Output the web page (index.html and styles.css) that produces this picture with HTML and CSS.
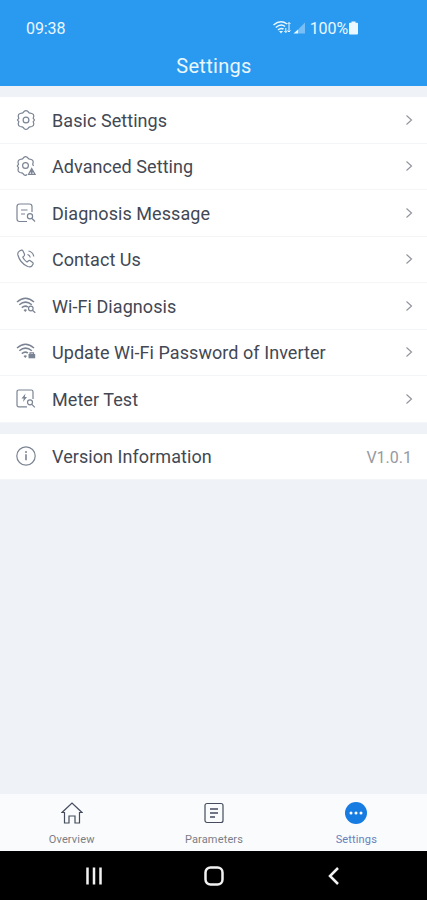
FILE: index.html
```html
<!DOCTYPE html>
<html lang="en">
<head>
    <meta charset="utf-8">
    <title>Settings</title>
    <link rel="stylesheet" href="styles.css">
</head>
<body>
<!-- shapes used in more than one row -->
<svg class="defs">
    <symbol id="arrow" viewBox="0 0 8 12"><path d="M1.5 1.5 6.5 6l-5 4.5"/></symbol>
    <symbol id="gear" viewBox="0 0 20 20">
        <path d="M8.300 1.300Q10 0 11.700 1.300L13.200 2.900 15.800 3.500Q17.900 4.100 17.800 6.200L17.200 8.300 18.500 10 17.200 11.700 17.800 13.800Q17.900 15.900 15.800 16.500L13.200 17.100 11.700 18.700Q10 20 8.300 18.700L6.800 17.100 4.200 16.500Q2.100 15.900 2.200 13.800L2.800 11.700 1.500 10 2.800 8.300 2.200 6.200Q2.100 4.100 4.200 3.500L6.800 2.900z"/>
        <circle cx="10" cy="10" r="2.900"/>
    </symbol>
    <symbol id="wifi" viewBox="0 0 20 20">
        <path d="M1 6Q9.500-1.500 18 6M3.300 8.800Q9.500 3.500 15.800 8.800M5.800 11.600Q9 9 12 11" stroke-width="1.500"/>
        <path class="fill" d="M7.500 14q1.700-1.300 3.500 0l-1.700 2z"/>
    </symbol>
</svg>
<div class="header">
    <div class="status">
        <span>09:38</span>
        <div class="signals">
            <svg class="net" width="33" height="16" viewBox="0 0 33 16">
                <path d="M.5 5Q7.500-1 14 4M2.800 7.500Q8 3 12 6.500M5 9.800Q8 7.500 10.500 9" stroke-width="1.500"/>
                <path class="fill" d="M6 11h4l-2 2.500z"/>
                <path d="M12.800 12.500V8m-1.500 3 1.500 1.500 1.500-1.500M16 2.500V12m-1.500-1.500L16 12l1.500-1.500M14.500 4 16 2.500 17.500 4"/>
                <path class="fill" d="M20.500 13.500 25 9.500v4z"/>
                <path class="faint" d="M25 13.500v-4l7-7v11z"/>
            </svg>
            <span class="percent">100%</span>
            <svg width="9" height="14" viewBox="0 0 9 14"><path class="fill" d="M2.500 1.800V.5h4v1.300H8q1 0 1 1v9.700q0 1-1 1H1q-1 0-1-1V2.800q0-1 1-1z"/></svg>
        </div>
    </div>
    <div class="title">Settings</div>
</div>
<div class="list">
    <div class="row">
        <svg class="icon"><use href="#gear"/></svg>
        <span class="label">Basic Settings</span>
        <svg class="arrow"><use href="#arrow"/></svg>
    </div>
    <div class="row">
        <svg class="icon" viewBox="0 0 20 20">
            <path d="M11 18.500Q9.500 20 8 18.700L6.500 17.100 4 16.500Q1.900 15.900 2 13.800L2.500 11.700 1.300 10 2.500 8.300 2 6.200Q1.900 4.100 4 3.500L6.500 2.900 8 1.300Q9.500 0 11.200 1.300L12.800 2.900 15.300 3.500Q17.300 4.100 17.200 6.200L16.700 8.300 17.500 10"/>
            <circle cx="9.500" cy="9.500" r="2.900"/>
            <path d="m15.700 12.500 3.300 5.800h-6.500zM14 15.800h3.500M15.700 14v4"/>
        </svg>
        <span class="label">Advanced Setting</span>
        <svg class="arrow"><use href="#arrow"/></svg>
    </div>
    <div class="row">
        <svg class="icon" viewBox="0 0 20 20">
            <path d="M11 18.500H3.500q-2.500 0-2.500-2.500V3.500Q1 1 3.500 1h10Q16 1 16 3.500V9M5 7h6.500M5 11h4"/>
            <circle cx="14" cy="13.300" r="2.600"/>
            <path d="m16 15.500 3 3"/>
        </svg>
        <span class="label">Diagnosis Message</span>
        <svg class="arrow"><use href="#arrow"/></svg>
    </div>
    <div class="row">
        <svg class="icon" viewBox="0 0 20 20">
            <path d="M3.500 2 5.500 1.200q1-.2 1.500.8l1.400 3q.4 1-.3 1.800L6.800 8.200q1.400 3 4.200 4.800l1.600-1.300q.8-.6 1.700 0l2.300 1.700q1 .9.300 2l-1 1.600q-1.400 1.500-4.200.5Q4 14.200 1.900 6q-.6-2.800 1.600-4zM11.500 5.500q2.300.6 2.800 3M12.500 2q4.500 1 5.300 5.500"/>
        </svg>
        <span class="label">Contact Us</span>
        <svg class="arrow"><use href="#arrow"/></svg>
    </div>
    <div class="row">
        <svg class="icon" viewBox="0 0 20 20">
            <use href="#wifi"/>
            <circle cx="14.800" cy="12.500" r="2.300"/>
            <path d="m16.400 14.200 2.900 2.500"/>
        </svg>
        <span class="label">Wi-Fi Diagnosis</span>
        <svg class="arrow"><use href="#arrow"/></svg>
    </div>
    <div class="row">
        <svg class="icon" viewBox="0 0 20 20">
            <use href="#wifi"/>
            <path class="fill" d="M12.500 12h6.700v4.300h-6.700z"/>
            <path d="M14 12v-1.200h3.500V12"/>
        </svg>
        <span class="label">Update Wi-Fi Password of Inverter</span>
        <svg class="arrow"><use href="#arrow"/></svg>
    </div>
    <div class="row">
        <svg class="icon" viewBox="0 0 20 20">
            <path d="M11 17.800H2.800q-1.800 0-1.800-1.800V2.800Q1 1 2.800 1h12.400Q17 1 17 2.800V10"/>
            <path class="fill" d="M9.500 4.500 5.500 9.500h2.300L7 13l4-5H8.800z"/>
            <circle cx="14" cy="13.300" r="2.500"/>
            <path d="m15.800 15.300 3 3"/>
        </svg>
        <span class="label">Meter Test</span>
        <svg class="arrow"><use href="#arrow"/></svg>
    </div>
</div>
<div class="list">
    <div class="row">
        <svg class="icon" viewBox="0 0 20 20">
            <circle cx="10" cy="10" r="9.200"/>
            <path d="M10 8.300v6" stroke-width="1.600"/>
            <circle class="fill" cx="10" cy="6" r="1"/>
        </svg>
        <span class="label">Version Information</span>
        <span class="value">V1.0.1</span>
    </div>
</div>
<div class="tabs">
    <div class="tab">
        <svg width="22" height="22" viewBox="0 0 22 22"><path d="M3.500 10.500H1L11 1l10 9.500h-2.500V21H14v-7H8v7H3.500z"/></svg>
        <span>Overview</span>
    </div>
    <div class="tab">
        <svg width="22" height="22" viewBox="0 0 22 22"><rect x="2" y="1.500" width="18" height="19" rx="2"/><path d="M7 7h8M7 11h8M7 15h5" stroke-width="1.700"/></svg>
        <span>Parameters</span>
    </div>
    <div class="tab active">
        <svg width="22" height="22" viewBox="0 0 22 22"><circle class="disc" cx="11" cy="11" r="11"/><circle class="dot" cx="6" cy="11" r="1.500"/><circle class="dot" cx="11" cy="11" r="1.500"/><circle class="dot" cx="16" cy="11" r="1.500"/></svg>
        <span>Settings</span>
    </div>
</div>
<div class="navbar">
    <svg width="20" height="20" viewBox="0 0 20 20"><path d="M3.500 1.500v17M10 1.500v17M16.500 1.500v17"/></svg>
    <svg width="20" height="20" viewBox="0 0 20 20"><rect x="1.500" y="1.500" width="17" height="17" rx="5"/></svg>
    <svg width="20" height="20" viewBox="0 0 20 20"><path d="M14 2 6 10l8 8"/></svg>
</div>
</body>
</html>
```
FILE: styles.css
```css
body {
    margin: 0;
    height: 900px;
    display: flex;
    flex-direction: column;
    background-color: #eff2f6;
    font-family: Roboto, "Liberation Sans", sans-serif;
    color: #424854;
}
svg {
    display: block;
    fill: none;
    stroke: currentColor;
    stroke-width: 1.2;
}
.defs {
    position: absolute;
    width: 0;
    height: 0;
}
.fill {
    fill: currentColor;
    stroke: none;
}
.faint {
    fill: currentColor;
    stroke: none;
    opacity: 0.4;
}
.header {
    height: 86px;
    background-color: #2a9af0;
    color: #eaf7ff;
}
.status {
    display: flex;
    justify-content: space-between;
    align-items: center;
    height: 20px;
    padding: 18px 69px 0 26px;
    font-size: 16px;
    letter-spacing: -0.1px;
}
.signals {
    display: flex;
    align-items: center;
}
.net {
    margin-right: 4px;
    stroke-width: 1;
}
.percent {
    margin-right: 1px;
}
.title {
    padding: 16px 0 0 1px;
    font-size: 20px;
    line-height: 24px;
    text-align: center;
    letter-spacing: 0.3px;
}
.list {
    margin-top: 11px;
    background-color: #fff;
}
.row {
    box-sizing: border-box;
    display: flex;
    align-items: center;
    height: 46.500px;
    padding: 0 14px 0 16px;
    border-bottom: 1px solid #f4f5f7;
}
.icon {
    width: 20px;
    height: 20px;
    margin-right: 16px;
    color: #7b8494;
}
.label {
    flex: 1;
    padding-top: 1px;
    font-size: 18px;
    letter-spacing: 0.06px;
}
.arrow {
    width: 8px;
    height: 12px;
    color: #92969d;
}
.value {
    padding: 2px 1px 0 0;
    font-size: 16px;
    color: #9699a0;
}
.tabs {
    display: flex;
    height: 57px;
    margin-top: auto;
    background-color: #fafbfc;
}
.tab {
    flex: 1;
    display: flex;
    flex-direction: column;
    align-items: center;
    padding: 8px 0 0 1px;
    font-size: 11px;
    letter-spacing: 0.15px;
    color: #454c5d;
}
.tab span {
    margin-top: 9px;
    line-height: 13px;
    color: #7a7e86;
}
.tab.active span {
    color: #6581bd;
}
.disc {
    fill: #177ce2;
    stroke: none;
}
.dot {
    fill: #fff;
    stroke: none;
}
.navbar {
    display: flex;
    justify-content: space-between;
    height: 49px;
    padding: 0 83px 0 84px;
    align-items: center;
    background-color: #000;
    color: #f2f2f2;
}
.navbar svg {
    stroke-width: 2.500;
}
```
